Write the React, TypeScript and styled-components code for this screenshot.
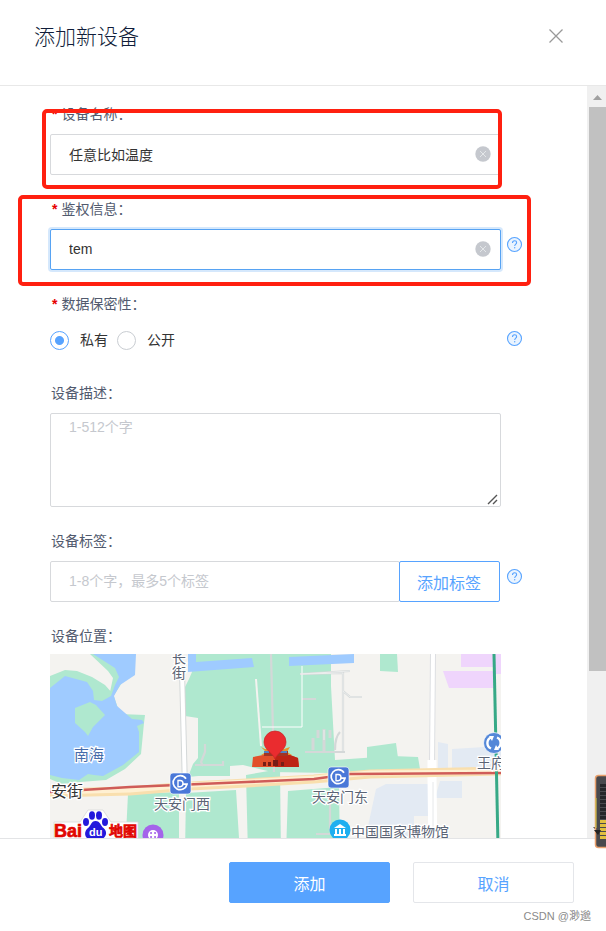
import React from "react";
import styled, { createGlobalStyle, css } from "styled-components";

const GlobalStyle = createGlobalStyle`
  *, *::before, *::after { box-sizing: border-box; }
  body {
    margin: 0;
    background: #fff;
    color: #333;
    font-family: "Liberation Sans", "Noto Sans CJK SC", sans-serif;
    font-size: 14px;
    line-height: 20px;
    font-weight: 400;
  }
  input, textarea, button { font: inherit; }
`;

const Dialog = styled.section`
  position: relative;
  display: flex;
  flex-direction: column;
  height: 100vh;
  overflow: hidden;
`;

const Header = styled.header`
  flex: none;
  display: flex;
  align-items: flex-start;
  justify-content: space-between;
  padding: 21px 40px 32px 34px;
  border-bottom: 1px solid #e8e8e8;
`;

const Title = styled.h1`
  margin: 0;
  font-size: 21px;
  line-height: 32px;
  font-weight: 300;
  color: #101d3a;
`;

const CloseButton = styled.button`
  display: flex;
  padding: 5px 0;
  border: 0;
  background: none;
  color: #999;
`;

const Body = styled.div`
  flex: 1;
  min-height: 0;
  display: flex;
`;

const Form = styled.form`
  flex: 1;
  min-width: 0;
  overflow: hidden;
  padding: 18px 0 0 50px;
  display: flex;
  flex-direction: column;
  gap: 24px;
`;

const Field = styled.div<{ $gap?: number }>`
  flex: none;
  position: relative;
  display: flex;
  flex-direction: column;
  gap: ${(p) => p.$gap ?? 10}px;
  padding-right: 86px;
`;

const Highlight = styled.span<{ $wide?: boolean }>`
  position: absolute;
  inset: ${(p) => (p.$wide ? "-4px 56px -16px -32px" : "5px 85px -14px -8px")};
  border: 4px solid #ff2010;
  border-radius: 5px;
  pointer-events: none;
`;

const labelStyle = css`
  padding: 0 0 0 1px;
  font-size: 14px;
  line-height: 20px;
  color: #515a6e;
`;

const Label = styled.label`
  ${labelStyle}
`;

const Caption = styled.div`
  ${labelStyle}
`;

const Star = styled.span`
  margin: 0 4px 0 1px;
  font-weight: 700;
  color: #e60000;
`;

const Control = styled.div`
  position: relative;
  display: flex;
`;

const boxStyle = css`
  flex: 1;
  min-width: 0;
  width: 100%;
  border: 1px solid #d7d9dc;
  border-radius: 2px;
  background: #fff;
  color: #333;
  outline: none;
  &::placeholder { color: #c5c8ce; opacity: 1; }
`;

const TextInput = styled.input<{ $active?: boolean }>`
  ${boxStyle}
  height: 41px;
  padding: 0 36px 1px 18px;
  ${(p) =>
    p.$active &&
    css`
      border-color: #57a3f3;
      box-shadow: 0 0 0 2px rgba(45, 140, 240, 0.2);
    `}
`;

const TextArea = styled.textarea`
  ${boxStyle}
  display: block;
  height: 94px;
  padding: 3px 18px;
  resize: none;
`;

const ResizeGrip = styled.svg`
  position: absolute;
  right: 3px;
  bottom: 2px;
`;

const ClearButton = styled.button`
  position: absolute;
  right: 10px;
  top: 12px;
  display: flex;
  padding: 0;
  border: 0;
  background: none;
`;

const HelpButton = styled.button`
  position: absolute;
  left: calc(100% + 5px);
  top: 18%;
  display: flex;
  padding: 0;
  border: 0;
  background: none;
`;

const RadioRow = styled.div`
  position: relative;
  display: flex;
  align-items: center;
  gap: 9px;
  height: 35px;
  padding-bottom: 3px;
`;

const RadioLabel = styled.label`
  display: flex;
  align-items: center;
  gap: 11px;
`;

const Radio = styled.input`
  appearance: none;
  width: 19px;
  height: 19px;
  margin: 0;
  border: 1px solid #c9cdd2;
  border-radius: 50%;
  background: #fff;
  &:checked {
    border-color: #57a3ff;
    background: radial-gradient(circle, #57a3ff 4px, #fff 5px);
  }
`;

const TagButton = styled.button`
  flex: none;
  padding: 4px 18px 0 17px;
  margin: 0 1px 0 -1px;
  border: 1px solid #57a3ff;
  border-radius: 2px;
  background: #fff;
  color: #57a3ff;
  font-size: 16px;
`;

const MapView = styled.svg`
  display: block;
  width: 100%;
  height: 240px;
  font-family: "Noto Sans CJK SC", sans-serif;
  font-weight: 400;
`;

const ScrollBar = styled.div`
  flex: none;
  display: flex;
  flex-direction: column;
  width: 19px;
  padding-left: 2px;
  background: #f0f0f0;
`;

const ScrollArrow = styled.svg`
  flex: none;
  width: 17px;
  height: 21px;
`;

const ScrollTrack = styled.div`
  flex: 1;
  display: flex;
  flex-direction: column;
`;

const ScrollThumb = styled.div`
  flex: 0 0 79.5%;
  background: #c1c1c1;
`;

const Footer = styled.footer`
  flex: none;
  border-top: 1px solid #e3e4e6;
  padding: 23px 32px 7px;
`;

const Actions = styled.div`
  display: flex;
  justify-content: flex-end;
  gap: 23px;
`;

const ActionButton = styled.button<{ $primary?: boolean }>`
  width: 161px;
  height: 41px;
  padding: 4px 0 0;
  border: 1px solid ${(p) => (p.$primary ? "#57a3ff" : "#e4e6ea")};
  border-radius: 2px;
  background: ${(p) => (p.$primary ? "#57a3ff" : "#fff")};
  color: ${(p) => (p.$primary ? "#fff" : "#57a3ff")};
  font-size: 16px;
`;

const Credit = styled.p`
  margin: 5px -17px 0 0;
  text-align: right;
  font-size: 11px;
  line-height: 16px;
  color: #8a8a8a;
`;

const Meter = styled.svg`
  position: absolute;
  right: 0;
  bottom: 81px;
`;

const Clear = () => (
  <ClearButton type="button" aria-label="清除">
    <svg width="16" height="16" viewBox="0 0 16 16" aria-hidden="true">
      <circle cx="8" cy="8" r="7.7" fill="#c5c8ce" />
      <path d="M5 5l6 6M11 5l-6 6" stroke="#e8eaec" strokeWidth="0.9" />
    </svg>
  </ClearButton>
);

const Help = () => (
  <HelpButton type="button" aria-label="帮助">
    <svg width="17" height="17" viewBox="0 0 17 17" aria-hidden="true">
      <circle cx="8.5" cy="8.5" r="7" fill="#eaf4ff" stroke="#57a3ff" strokeWidth="1.1" />
      <path d="M6.5 7c0-1.4.9-2.2 2.1-2.2s2 .8 2 1.9c0 1.4-1.9 1.7-1.9 3.4" fill="none" stroke="#57a3ff" strokeWidth="1.1" />
      <circle cx="8.7" cy="11.8" r="0.7" fill="#57a3ff" />
    </svg>
  </HelpButton>
);

const Metro = ({ x, y }: { x: number; y: number }) => (
  <g transform={`translate(${x} ${y})`}>
    <rect width="21" height="21" rx="3" fill="#4a78d8" stroke="#fff" strokeWidth="0.6" />
    <path d="M16 5.8A7 7 0 1 0 17 11.2H12.5" fill="none" stroke="#fff" strokeWidth="1.7" />
    <path d="M8 7.5v6.2h2.2c3.8 0 3.8-6.2 0-6.2z" fill="none" stroke="#fff" strokeWidth="1.4" />
  </g>
);

const halo = { stroke: "#fff", strokeWidth: 2.5, paintOrder: "stroke" } as const;

const LocationMap = () => (
  <MapView viewBox="0 0 451 240" preserveAspectRatio="xMidYMin slice" role="img" aria-label="设备位置">
    <rect width="451" height="240" fill="#f4f3f0" />
    <g fill="#afe8cf">
      <path d="M0 22L15 16 27 17 42 23 55 31 63 40 70 60 95 61 94 69 91 100 75 115 56 126 30 128 12 130 0 125z" />
      <path d="M40 0L86 0 70 32 64 41 60 38 63 24 58 17z" />
      <path d="M138 0H281V32L285 106 342 102 368 103 370 115 281 119 222 118 193 111 180 112 180 122 148 122 138 123 143 110 148 104 148 64 135 62 135 33 139 25 142 18z" />
      <path d="M78 140L129 138V200H75z" />
      <path d="M136 139L186 136 190 200H135z" />
      <path d="M196 121L230 115 231 200H198z" />
      <path d="M238 137L289 133 290 200H236z" />
      <path d="M330 0H347L348 18 330 17z" />
      <path d="M317 93L346 89 348 104 317 108z" />
    </g>
    <path d="M43 0H86L85 21 70 31 64 42 67 52 82 65 92 66 94 69 87 72 89 78 89 98 73 111 53 122 44 121 38 120 29 126 12 124 0 121V34L15 22 37 28 43 37 44 46 52 47 61 42 65 31 69 23 65 14z" fill="#9fcbff" />
    <path d="M25 54L40 48 46 51 55 61 43 73 38 82 35 78 25 69z" fill="#afe8cf" />
    <path d="M138 0V18L204 13 202 4 146 8V0zM239 3L304 0V9L239 12z" fill="#9fcbff" />
    <path d="M411 0H451V20H443V34H399V34L393 17H443V13H411z" fill="#efd5fc" />
    <path d="M388 88l10 2v24h-10zM402 95l49-3v24l-49 1zM390 127h22v17h-27zM326 135l10-5h45v32h-17v38h-52z" fill="#e3eaf3" />
    <g fill="none" stroke="#d4d8d8" strokeWidth="3">
      <path d="M132 16l3 120" strokeWidth="6" />
      <path d="M221 0l3 118M250 20l50-3M252 20l41-1v78M293 37l7 6 12 0M252 45h14M255 98h40M155 90v8l-4 10 2 4M145 111h28v-4M290 78q-5 5-5 18M280 149v28M266 180h18" strokeWidth="2.2" />
      <path d="M263 84v12M268 76v8M274 75v22M280 76v8" />
    </g>
    <g fill="none" stroke="#fff">
      <path d="M132 16l3 120" strokeWidth="4" />
      <path d="M206 25l5 67" strokeWidth="2" stroke="#f4f3f0" />
      <path d="M212 73h40V12" strokeWidth="1" />
      <path d="M383 0l-1 110" stroke="#dddfe2" strokeWidth="6" />
      <path d="M383 0l-1 110" strokeWidth="4" />
      <path d="M382 106v18l1 80" strokeWidth="9" />
      <path d="M383 128v60" stroke="#e6e8ea" strokeWidth="1" />
      <path d="M250 20l50-3M252 20l41-1v78M293 37l7 6 12 0M274 76v10" stroke="#eceeee" strokeWidth="1" />
    </g>
    <path d="M0 139L80 137 140 132 197 129 264 125 320 120 451 117" fill="none" stroke="#f9dfae" strokeWidth="9" />
    <path d="M0 138L80 136 140 131 197 128 264 124 320 119 451 118" fill="none" stroke="#fff0d2" strokeWidth="5" />
    <path d="M0 138L80 133 197 128 264 125 300 120 451 119" fill="none" stroke="#cf5c58" strokeWidth="2.6" />
    <path d="M444 0l5 240" stroke="#36a986" strokeWidth="3" />
    <g fontSize="14" fill="#5b6475" {...halo}>
      <text x="122" y="9">长</text>
      <text x="122" y="24">街</text>
      <text x="104" y="155">天安门西</text>
      <text x="262" y="148">天安门东</text>
      <text x="301" y="183">中国国家博物馆</text>
      <text x="427" y="114">王府井</text>
    </g>
    <text x="24" y="106" fontSize="15" fill="#456baa" {...halo}>南海</text>
    <text x="1" y="143" fontSize="16" fill="#333" {...halo}>安街</text>
    <Metro x={120} y={119} />
    <Metro x={278} y={113} />
    <g transform="translate(444 89)">
      <circle r="10.5" fill="#5588d8" stroke="#fff" strokeWidth="0.7" />
      <path d="M-3 5.5A6 6 0 0 1-3-5.5M3-5.5A6 6 0 0 1 3 5.5" fill="none" stroke="#fff" strokeWidth="2.4" />
      <path d="M-5-7l5 0-2 5zM5 7l-5 0 2-5z" fill="#fff" />
    </g>
    <g>
      <path d="M203 103l10-2 27 0 8 3 1 9h-47z" fill="#e2502a" />
      <path d="M225 101l15 0 8 3 1 9h-24z" fill="#bd2414" />
      <path d="M211 93l4 2h19l6-2-3 5 5 3h-31l5-3z" fill="#e5942d" />
      <path d="M214 97h24v5h-24z" fill="#a23524" />
      <path d="M214 98h5M230 98h7" stroke="#4f83c4" strokeWidth="2" />
      <path d="M213 108h3v4h-3zM218 108h3v4h-3zM223 106h5v6h-5zM231 108h3v4h-3z" fill="#761e16" />
      <path d="M225 105c-2-6-11-9-11-17a11 11 0 0 1 22 0c0 8-9 11-11 17z" fill="#ea2c2f" stroke="#c92226" strokeWidth="0.7" />
    </g>
    <g>
      <path d="M4 168h26l8-12h15l8 12h27v30H4z" fill="#fff" stroke="#d9d9d9" strokeWidth="0.8" />
      <g fill="#e10602" stroke="#e10602" strokeWidth="0.7" fontWeight="700">
        <text x="4" y="183" fontSize="18" fontFamily="Liberation Sans, sans-serif">Bai</text>
        <text x="59" y="182" fontSize="14">地图</text>
      </g>
      <g fill="#2319dc">
        <ellipse cx="36" cy="168" rx="3" ry="4" />
        <ellipse cx="42" cy="161.5" rx="3" ry="4.2" />
        <ellipse cx="49" cy="161.5" rx="3" ry="4.2" />
        <ellipse cx="55" cy="168" rx="3" ry="4" />
        <path d="M45.5 167c5 0 5 5 8 7 5 4 2 11-3 11H40c-5 0-7-7-2-11 3-2 3-7 7.5-7z" />
      </g>
      <text x="39" y="182" fontSize="11" fontWeight="700" fill="#fff" fontFamily="Liberation Sans, sans-serif">du</text>
    </g>
    <g transform="translate(103 181)">
      <circle r="10.5" fill="#a464ea" />
      <circle r="5" fill="#fff" />
      <path d="M-2-2h.1M2-2h.1M-2 2h.1M2 2h.1" stroke="#a464ea" strokeWidth="2" strokeLinecap="round" />
    </g>
    <g transform="translate(290 176)">
      <circle r="10.5" fill="#1eaff0" />
      <path d="M-6-2L0-6 6-2zM-5-1h2v5h-2zM-1-1h2v5h-2zM3-1h2v5h-2zM-6 4H6V6H-6z" fill="#fff" />
    </g>
  </MapView>
);

const ticks = Array.from({ length: 14 }, (_, i) => i);

export default function App() {
  return (
    <>
      <GlobalStyle />
      <Dialog role="dialog" aria-labelledby="title">
        <Header>
          <Title id="title">添加新设备</Title>
          <CloseButton type="button" aria-label="关闭">
            <svg width="20" height="20" viewBox="0 0 20 20" aria-hidden="true">
              <path d="M3.5 3.5l13 13M16.5 3.5l-13 13" stroke="currentColor" strokeWidth="1.3" />
            </svg>
          </CloseButton>
        </Header>
        <Body>
          <Form id="device" onSubmit={(e) => e.preventDefault()}>
            <Field>
              <Label htmlFor="name"><Star>*</Star>设备名称：</Label>
              <Control>
                <TextInput id="name" defaultValue="任意比如温度" />
                <Clear />
              </Control>
              <Highlight />
            </Field>
            <Field>
              <Label htmlFor="auth"><Star>*</Star>鉴权信息：</Label>
              <Control>
                <TextInput id="auth" defaultValue="tem" $active />
                <Clear />
                <Help />
              </Control>
              <Highlight $wide />
            </Field>
            <Field role="radiogroup" aria-labelledby="privacy">
              <Caption id="privacy"><Star>*</Star>数据保密性：</Caption>
              <RadioRow>
                <RadioLabel><Radio type="radio" name="privacy" defaultChecked />私有</RadioLabel>
                <RadioLabel><Radio type="radio" name="privacy" />公开</RadioLabel>
                <Help />
              </RadioRow>
            </Field>
            <Field>
              <Label htmlFor="description">设备描述：</Label>
              <Control>
                <TextArea id="description" placeholder="1-512个字" />
                <ResizeGrip width="11" height="11" viewBox="0 0 11 11" aria-hidden="true">
                  <path d="M1 10L10 1M6 10L10 6" stroke="#555" strokeWidth="1.4" />
                </ResizeGrip>
              </Control>
            </Field>
            <Field>
              <Label htmlFor="tags">设备标签：</Label>
              <Control>
                <TextInput id="tags" placeholder="1-8个字，最多5个标签" />
                <TagButton type="button">添加标签</TagButton>
                <Help />
              </Control>
            </Field>
            <Field $gap={8}>
              <Caption>设备位置：</Caption>
              <LocationMap />
            </Field>
          </Form>
          <ScrollBar aria-hidden="true">
            <ScrollArrow viewBox="0 0 17 21"><path d="M4 14l4.5-5 4.5 5z" fill="#a0a0a0" /></ScrollArrow>
            <ScrollTrack><ScrollThumb /></ScrollTrack>
            <ScrollArrow viewBox="0 0 17 21"><path d="M4 10l4.5 5 4.5-5z" fill="#505050" /></ScrollArrow>
          </ScrollBar>
        </Body>
        <Footer>
          <Actions>
            <ActionButton type="submit" form="device" $primary>添加</ActionButton>
            <ActionButton type="button">取消</ActionButton>
          </Actions>
          <Credit>CSDN @渺邈</Credit>
        </Footer>
        <Meter width="12" height="76" viewBox="0 0 12 76" aria-hidden="true">
          <rect x="1.5" y="1.5" width="20" height="72" rx="3" fill="#48494d" stroke="#e9a06c" strokeWidth="1.5" />
          <path d="M2 24v30" stroke="#c8c84a" strokeWidth="1" />
          {ticks.map((i) => (
            <rect key={i} x="6" y={10 + i * 4} width="6" height="3" fill={i > 8 ? "#e0c040" : "#252629"} />
          ))}
          <path d="M0 56h7l-3 5z" fill="#222" />
        </Meter>
      </Dialog>
    </>
  );
}
